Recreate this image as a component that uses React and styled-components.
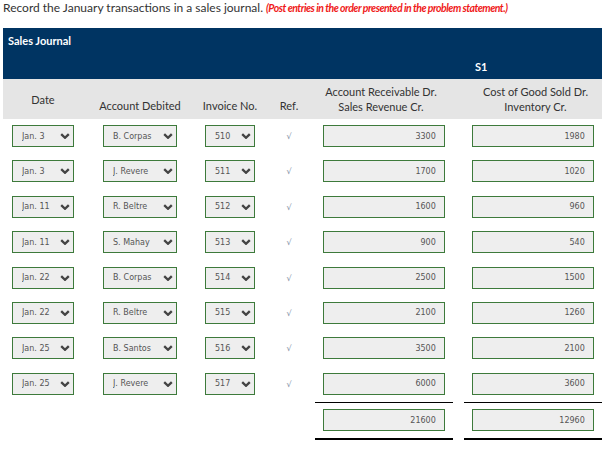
import React from 'react';
import styled, { createGlobalStyle } from 'styled-components';

const GlobalStyle = createGlobalStyle`
    body {
        margin: 0;
        padding: 0 3px;
        background: #fff;
        font-family: Lato, 'Liberation Sans', sans-serif;
        color: #333;
    }
`;

const COLS = '80px 114px 66px 52px 143px 144px';

const Intro = styled.p`
    margin: 0;
    padding-top: 1px;
    font-size: 12px;
    line-height: 14px;
    color: #333;
`;

const Hint = styled.span`
    color: #f01a1a;
    font-weight: 700;
    font-style: italic;
    font-size: 10.5px;
    letter-spacing: -0.5px;
`;

const Journal = styled.div`
    width: 599px;
    margin-top: 13px;
`;

const Banner = styled.div`
    height: 51px;
    background: #003462;
    color: #fff;
    font-weight: 700;
    font-size: 11px;
    display: flex;
    flex-direction: column;
    justify-content: space-between;
    padding: 6px 0 6px 5px;
    box-sizing: border-box;
`;

const BannerRef = styled.div`
    padding-left: 467px;
`;

const HeadRow = styled.div`
    display: grid;
    grid-template-columns: ${COLS};
    height: 40px;
    background: #e5e5e5;
    font-size: 11px;
    line-height: 15px;
    color: #333;
`;

const HeadCell = styled.div`
    display: flex;
    justify-content: center;
    text-align: center;
    align-items: ${(p) => p.$align || 'center'};
    padding-bottom: ${(p) => (p.$align === 'flex-end' ? '6px' : '0')};
    padding-left: ${(p) => (p.$side === 'right' ? '11px' : '0')};
    padding-right: ${(p) => (p.$side === 'left' ? '11px' : '0')};
`;

const Row = styled.div`
    display: grid;
    grid-template-columns: ${COLS};
    padding: 6px 0 7.4px;
`;

const TotalRow = styled(Row)`
    padding: 0;
`;

const Cell = styled.div`
    display: flex;
    justify-content: center;
    align-items: flex-start;
`;

const AmountCell = styled(Cell)`
    margin-left: ${(p) => (p.$side === 'right' ? '5.5px' : '0')};
    margin-right: ${(p) => (p.$side === 'left' ? '5.5px' : '0')};
    ${(p) =>
        p.$total &&
        `
        border-top: 1px solid #000;
        border-bottom: 2px solid #000;
        padding: 6px 0 7px;
    `}
`;

const SelectBox = styled.div`
    position: relative;
    width: ${(p) => p.$width}px;
    height: 22px;
`;

const Select = styled.select`
    display: block;
    appearance: none;
    box-sizing: border-box;
    width: 100%;
    height: 22px;
    margin: 0;
    padding: 0 0 0 9px;
    border: 1px solid #3d7a3b;
    border-radius: 0;
    background: #eeeeee;
    color: #555;
    font: 8px 'DejaVu Sans', Verdana, sans-serif;
    outline: none;
`;

const Chevron = styled.svg`
    position: absolute;
    right: 4px;
    top: 8px;
    pointer-events: none;
`;

const Check = styled.span`
    margin-top: 7px;
    font-family: 'DejaVu Sans', sans-serif;
    font-size: 8px;
    line-height: 9px;
    color: #7a8aa0;
`;

const Amount = styled.input`
    display: block;
    width: 122px;
    height: 22px;
    box-sizing: border-box;
    margin: 0;
    padding: 0 8px 0 0;
    border: 1px solid #3d7a3b;
    border-radius: 0;
    background: #eeeeee;
    color: #555;
    text-align: right;
    font: 8px 'DejaVu Sans', Verdana, sans-serif;
    outline: none;
`;

const entries = [
    ['Jan. 3', 'B. Corpas', '510', 3300, 1980],
    ['Jan. 3', 'J. Revere', '511', 1700, 1020],
    ['Jan. 11', 'R. Beltre', '512', 1600, 960],
    ['Jan. 11', 'S. Mahay', '513', 900, 540],
    ['Jan. 22', 'B. Corpas', '514', 2500, 1500],
    ['Jan. 22', 'R. Beltre', '515', 2100, 1260],
    ['Jan. 25', 'B. Santos', '516', 3500, 2100],
    ['Jan. 25', 'J. Revere', '517', 6000, 3600],
];

const Dropdown = ({ value, width }) => (
    <SelectBox $width={width}>
        <Select value={value} onChange={() => {}}>
            <option>{value}</option>
        </Select>
        <Chevron width='10' height='6' viewBox='0 0 10 6'>
            <polyline points='1.2,1.1 5,4.8 8.8,1.1' fill='none' stroke='#444' strokeWidth='2.3' />
        </Chevron>
    </SelectBox>
);

const App = () => {
    const totalAr = entries.reduce((s, e) => s + e[3], 0);
    const totalCogs = entries.reduce((s, e) => s + e[4], 0);

    return (
        <>
            <GlobalStyle />
            <Intro>
                Record the January transactions in a sales journal.{' '}
                <Hint>(Post entries in the order presented in the problem statement.)</Hint>
            </Intro>
            <Journal>
                <Banner>
                    <div>Sales Journal</div>
                    <BannerRef>S1</BannerRef>
                </Banner>
                <HeadRow>
                    <HeadCell>Date</HeadCell>
                    <HeadCell $align='flex-end'>Account Debited</HeadCell>
                    <HeadCell $align='flex-end'>Invoice No.</HeadCell>
                    <HeadCell $align='flex-end'>Ref.</HeadCell>
                    <HeadCell $side='left'>
                        Account Receivable Dr.
                        <br />
                        Sales Revenue Cr.
                    </HeadCell>
                    <HeadCell $side='right'>
                        Cost of Good Sold Dr.
                        <br />
                        Inventory Cr.
                    </HeadCell>
                </HeadRow>
                {entries.map(([date, account, invoice, ar, cogs], i) => (
                    <Row key={i}>
                        <Cell>
                            <Dropdown value={date} width={62} />
                        </Cell>
                        <Cell>
                            <Dropdown value={account} width={74} />
                        </Cell>
                        <Cell>
                            <Dropdown value={invoice} width={50} />
                        </Cell>
                        <Cell>
                            <Check>√</Check>
                        </Cell>
                        <AmountCell $side='left'>
                            <Amount readOnly value={ar} />
                        </AmountCell>
                        <AmountCell $side='right'>
                            <Amount readOnly value={cogs} />
                        </AmountCell>
                    </Row>
                ))}
                <TotalRow>
                    <div />
                    <div />
                    <div />
                    <div />
                    <AmountCell $side='left' $total>
                        <Amount readOnly value={totalAr} />
                    </AmountCell>
                    <AmountCell $side='right' $total>
                        <Amount readOnly value={totalCogs} />
                    </AmountCell>
                </TotalRow>
            </Journal>
        </>
    );
};

export default App;
